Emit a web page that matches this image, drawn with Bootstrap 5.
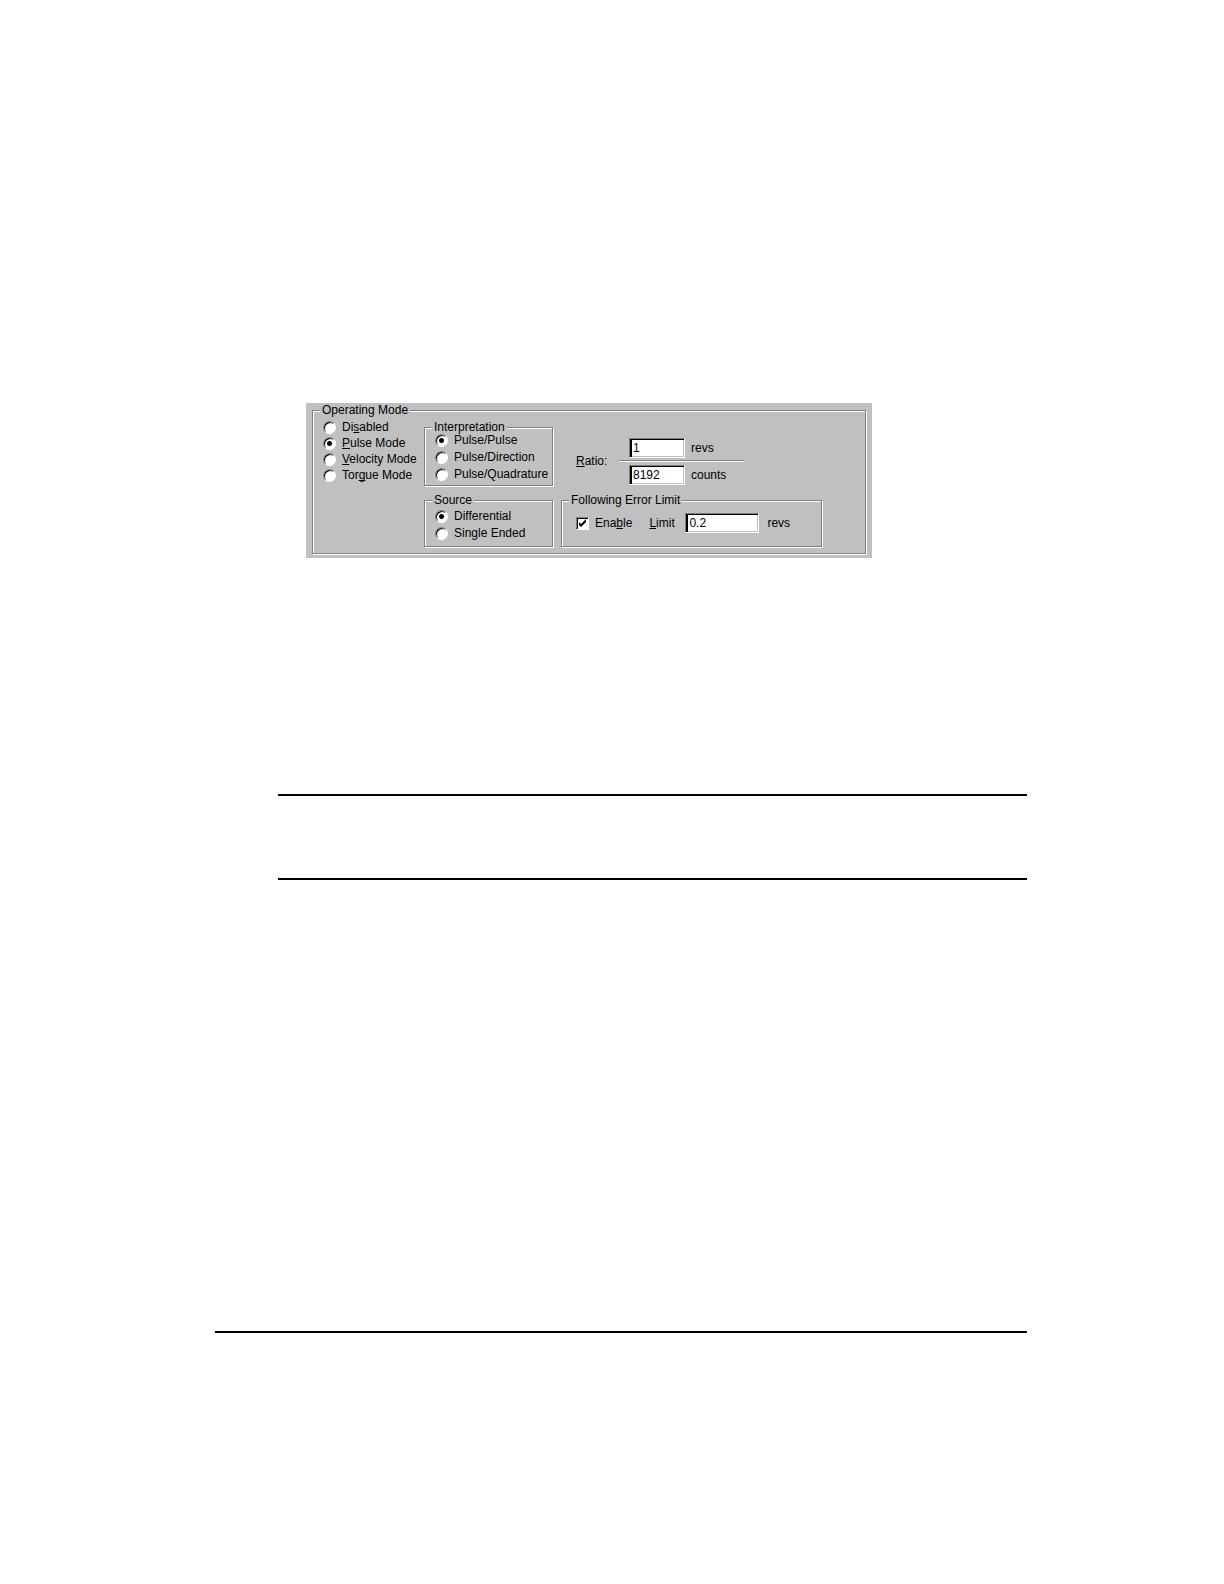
<!DOCTYPE html>
<html lang="en">
<head>
  <meta charset="UTF-8" />
  <meta name="viewport" content="width=device-width, initial-scale=1.0"/>
  <title>Operating Mode</title>
  <link href="https://cdn.jsdelivr.net/npm/bootstrap@5.3.3/dist/css/bootstrap.min.css" rel="stylesheet" />
  <style>
    body {
      background: #fff;
      color: #000;
      font-family: "Liberation Sans", Arial, sans-serif;
      font-size: 12px;
      line-height: 16px;
    }
    u {
      text-decoration-skip-ink: none;
    }
    .sheet {
      padding: 403px 197px 0 215px;
    }
    .panel {
      max-width: 566px;
      margin-left: 91px;
      padding: 1px 6px 4px;
      background: #c0c0c0;
    }

    /* etched group boxes */
    .group-box {
      border: 1px solid #808080;
      box-shadow: 1px 1px 0 #fff, inset 1px 1px 0 #fff;
    }
    .group-box > legend {
      float: none;
      width: auto;
      margin: 0 0 0 7px;
      padding: 0 2px;
      background: #c0c0c0;
      font-size: 12px;
      line-height: 13px;
    }
    .group-body {
      margin-top: -2px;
    }
    .mode-list {
      width: 111px;
      padding: 4px 0 0 10px;
    }
    .settings {
      display: grid;
      grid-template-columns: 129px 261px;
      grid-template-rows: 65px 53px;
      gap: 8px;
      padding: 6px 0;
    }
    .choices {
      padding-left: 10px;
    }
    .source-choices {
      padding-top: 3px;
    }
    .choice {
      display: flex;
      align-items: center;
      gap: 6px;
      white-space: nowrap;
    }
    .choices .choice {
      line-height: 17px;
    }

    /* sunken controls */
    .choice input {
      appearance: none;
      flex: none;
      width: 13px;
      height: 13px;
      margin: 0;
      background: #fff;
      border: 1px solid;
      border-color: #808080 #fff #fff #808080;
      box-shadow: inset 1px 1px 0 #000;
    }
    .choice input[type="radio"] {
      border-radius: 50%;
    }
    .choice input[type="radio"]:checked {
      background: radial-gradient(circle, #000 2px, #fff 3px);
    }
    .choice input[type="checkbox"]:checked {
      background: #fff url("data:image/svg+xml,%3Csvg xmlns='http://www.w3.org/2000/svg' viewBox='0 0 11 11'%3E%3Cpath d='M2 4v3l2 2 5-5V1L4 6z'/%3E%3C/svg%3E") center / 11px 11px no-repeat;
    }
    .edit {
      height: 20px;
      padding: 0 3px;
      color: #000;
      background: #fff;
      border: 1px solid;
      border-color: #808080 #fff #fff #808080;
      border-radius: 0;
      box-shadow: inset 2px 1px 0 #000, inset -1px -1px 0 #c0c0c0;
      font-size: 12px;
      line-height: 16px;
    }
    .edit-ratio {
      width: 56px;
    }
    .edit-limit {
      width: 74px;
    }
    .ratio-area {
      padding: 17px 0 0 15px;
    }
    .ratio-label {
      width: 43px;
      line-height: 46px;
    }
    .fraction {
      width: 125px;
    }
    .fraction-part {
      gap: 6px;
      padding-left: 10px;
    }
    .fraction hr {
      height: 2px;
      margin: 2px 0 3px;
      border: 0;
      border-top: 1px solid #808080;
      background: #fff;
      opacity: 1;
    }
    .limit-row {
      gap: 8px;
      padding: 8px 0 0 14px;
    }
    .limit-label {
      width: 28px;
      margin-left: 9px;
    }

    /* black rules further down the sheet */
    .rule {
      height: 2px;
      margin: 0;
      border: 0;
      background: #000;
      opacity: 1;
    }
    .note {
      margin: 236px 0 451px 63px;
    }
    .note .rule + .rule {
      margin-top: 82px;
    }
  </style>
</head>
<body>

<main class="sheet">
  <form class="panel" onsubmit="return false">
    <fieldset class="group-box">
      <legend>Operating Mode</legend>
      <div class="group-body d-flex">
        <div class="mode-list">
          <label class="choice"><input type="radio" name="mode"><span>Di<u>s</u>abled</span></label>
          <label class="choice"><input type="radio" name="mode" checked><span><u>P</u>ulse Mode</span></label>
          <label class="choice"><input type="radio" name="mode"><span><u>V</u>elocity Mode</span></label>
          <label class="choice"><input type="radio" name="mode"><span>Tor<u>g</u>ue Mode</span></label>
        </div>

        <div class="settings">
          <fieldset class="group-box">
            <legend>Interpretation</legend>
            <div class="group-body choices">
              <label class="choice"><input type="radio" name="interp" checked><span>Pulse/Pulse</span></label>
              <label class="choice"><input type="radio" name="interp"><span>Pulse/Direction</span></label>
              <label class="choice"><input type="radio" name="interp"><span>Pulse/Quadrature</span></label>
            </div>
          </fieldset>

          <div class="ratio-area d-flex align-items-start">
            <label class="ratio-label" for="revs"><u>R</u>atio:</label>
            <div class="fraction">
              <div class="fraction-part d-flex align-items-center">
                <input class="edit edit-ratio" type="text" id="revs" value="1">
                <label for="revs">revs</label>
              </div>
              <hr>
              <div class="fraction-part d-flex align-items-center">
                <input class="edit edit-ratio" type="text" id="counts" value="8192">
                <label for="counts">counts</label>
              </div>
            </div>
          </div>

          <fieldset class="group-box">
            <legend>Source</legend>
            <div class="group-body choices source-choices">
              <label class="choice"><input type="radio" name="source" checked><span>Differential</span></label>
              <label class="choice"><input type="radio" name="source"><span>Single Ended</span></label>
            </div>
          </fieldset>

          <fieldset class="group-box">
            <legend>Following Error Limit</legend>
            <div class="group-body limit-row d-flex align-items-center">
              <label class="choice"><input type="checkbox" checked><span>Ena<u>b</u>le</span></label>
              <label class="limit-label" for="limit"><u>L</u>imit</label>
              <input class="edit edit-limit" type="text" id="limit" value="0.2">
              <label for="limit">revs</label>
            </div>
          </fieldset>
        </div>
      </div>
    </fieldset>
  </form>

  <div class="note">
    <hr class="rule">
    <hr class="rule">
  </div>
  <hr class="rule">
</main>

<script src="https://cdn.jsdelivr.net/npm/bootstrap@5.3.3/dist/js/bootstrap.bundle.min.js"></script>
</body>
</html>
